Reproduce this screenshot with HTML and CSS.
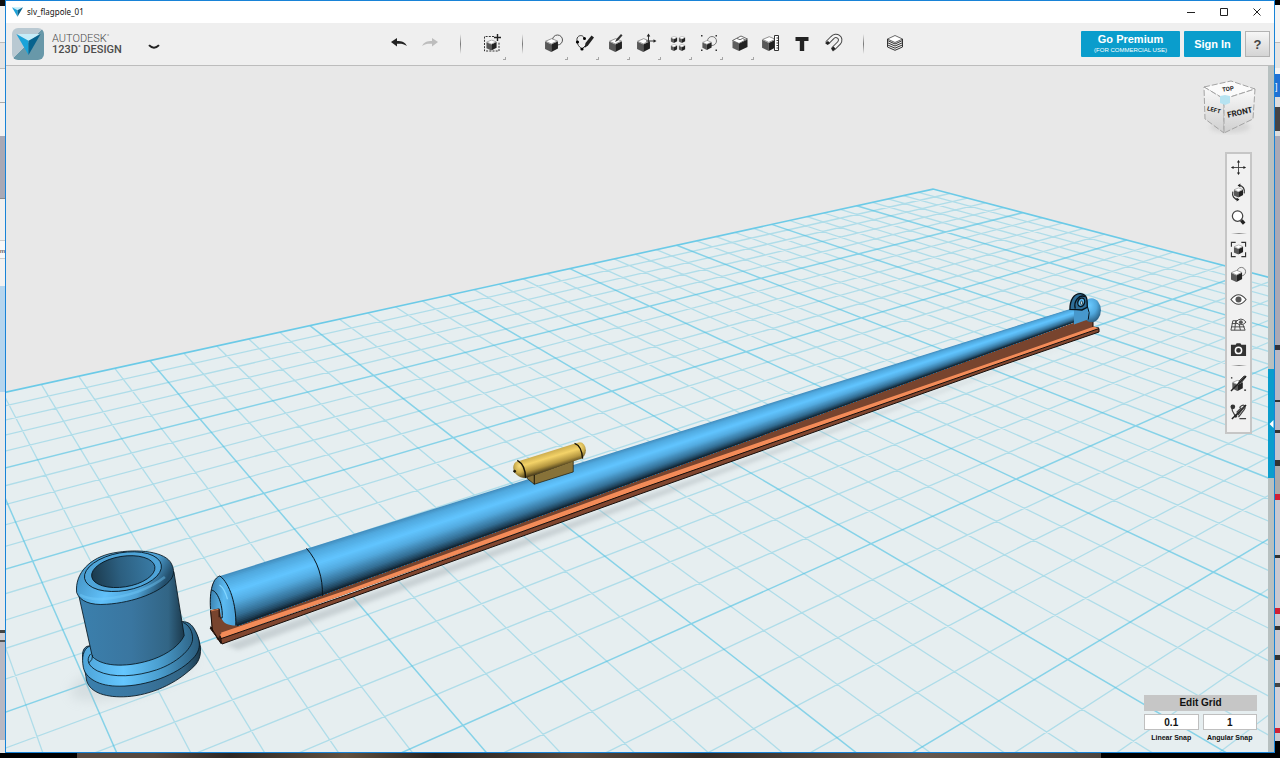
FILE: index.html
```html
<!DOCTYPE html>
<html lang="en">
<head>
<meta charset="utf-8">
<title>slv_flagpole_01</title>
<link rel="stylesheet" href="styles.css">
</head>
<body>
<svg class="defs" aria-hidden="true">
  <defs>
    <symbol id="cube" viewBox="0 0 12 13">
      <path d="M0 3.200 5.800 6v7L0 10.200z" fill="#585858"/>
      <path d="M5.800 6 12 3v6.800L5.800 13z" fill="#222"/>
      <path d="M.5 3 6.200.6l5.300 2.200-5.700 2.700z" fill="#fff" stroke="#666" stroke-width=".6"/>
    </symbol>
    <symbol id="mark" viewBox="0 0 22 19">
      <path d="M1 0h20l-10 7z" fill="#c6ecf8"/><path d="M0 0l11 6v13z" fill="#1aa3d9"/><path d="M22 0 11 6v13z" fill="#07638e"/>
    </symbol>
  </defs>
</svg>
<div class="desktop">
  <div class="edge edge-left"><span>m</span></div>
  <main class="window">
    <header class="titlebar">
      <svg class="title-mark"><use href="#mark"/></svg>
      <h1>slv_flagpole_01</h1>
      <div class="window-buttons">
        <button aria-label="Minimize"><svg viewBox="0 0 8 8"><path d="M0 4.500h8"/></svg></button>
        <button aria-label="Maximize"><svg viewBox="0 0 8 8"><path d="M.5.5h7v7h-7z"/></svg></button>
        <button aria-label="Close"><svg viewBox="0 0 8 8"><path d="M.5.5l7 7m0-7-7 7"/></svg></button>
      </div>
    </header>
    <div class="toolbar">
      <div class="brand">
        <span class="logo"><svg><use href="#mark"/></svg></span>
        <p class="brand-name">AUTODESK<sup>°</sup><b>123D<sup>°</sup> DESIGN</b></p>
        <button class="menu" aria-label="Application menu"><svg viewBox="0 0 12 6"><path d="M1 1.200c3 3.300 7 3.300 10 0" fill="none" stroke="#222" stroke-width="2"/></svg></button>
      </div>
      <nav class="tools" aria-label="Tools">
        <button aria-label="Undo"><svg viewBox="0 0 20 20"><path d="M2 9l6-4v3c5 0 8 1 10 5-3-2-6-2.500-10-2.200V13.500z" fill="#222"/></svg></button>
        <button aria-label="Redo" disabled><svg viewBox="0 0 20 20"><path d="M18 9l-6-4v3C7 8 4 9 2 13c3-2 6-2.500 10-2.200v2.700z" fill="#bdbdbd"/></svg></button>
        <i class="divider"></i>
        <button class="more" aria-label="Transform"><svg viewBox="0 0 20 20"><path d="M12 3.500H2.500v14.500h14.500V9" fill="none" stroke="#333" stroke-dasharray="2 1.200"/><use href="#cube" x="4" y="6.500" width="11" height="11"/><path d="M15.500 1v7M12 4.500h7" stroke="#222" stroke-width="1.400"/></svg></button>
        <i class="divider"></i>
        <button class="more" aria-label="Primitives"><svg viewBox="0 0 20 20"><circle cx="13.500" cy="7" r="5" fill="none" stroke="#555"/><use href="#cube" x="1" y="5" width="13" height="14"/></svg></button>
        <button class="more" aria-label="Sketch"><svg viewBox="0 0 20 20"><path d="M9 5C8 1 1 2 2 8c0 3 2 6 5 8l5-5" fill="none" stroke="#333"/><circle cx="9.500" cy="5.500" r="1.500"/><circle cx="2.500" cy="9" r="1.600"/><circle cx="7" cy="16" r="1.600"/><path d="m9.500 15 1-5 6-7.500 2.500 2-6 8z" fill="#222"/></svg></button>
        <button class="more" aria-label="Construct"><svg viewBox="0 0 20 20"><use href="#cube" x="3" y="5" width="13" height="14"/><path d="M9 9l1.500-3L15 1l1.500 1.500-4.500 5z" fill="#333"/></svg></button>
        <button class="more" aria-label="Modify"><svg viewBox="0 0 20 20"><use href="#cube" x="0" y="5" width="13" height="14"/><path d="M9 8h9M11.500 10V2" stroke="#333"/><path d="M11.500.500 9.700 3.500h3.600zM19.500 8l-3-1.800v3.600z" fill="#222"/></svg></button>
        <button class="more" aria-label="Pattern"><svg viewBox="0 0 20 20"><use href="#cube" x="2.500" y="3" width="7" height="7"/><use href="#cube" x="10.500" y="3" width="7" height="7"/><use href="#cube" x="2.500" y="11" width="7" height="7"/><use href="#cube" x="10.500" y="11" width="7" height="7"/></svg></button>
        <button class="more" aria-label="Grouping"><svg viewBox="0 0 20 20"><circle cx="13" cy="8" r="4.500" fill="none" stroke="#777"/><use href="#cube" x="3" y="7" width="10" height="10"/><path d="M2 2h1.500v1.500H2zM16.500 2H18v1.500h-1.500zM2 16.500h1.500V18H2zM16.500 16.500H18V18h-1.500z" fill="#333"/></svg></button>
        <button class="more" aria-label="Combine"><svg viewBox="0 0 20 20"><path d="M2.500 8 9 10.500V18l-6.500-3z" fill="#5e5e5e"/><path d="m9 10.500 8.500-4V14L9 18z" fill="#222"/><path d="M2.500 7.500 11 3l6.500 3L9 10.500z" fill="#fff" stroke="#444" stroke-width=".8"/><path d="m7 5.500 3 1.200 2.500-1.200 3 1.300" fill="none" stroke="#444" stroke-width=".8"/></svg></button>
        <button aria-label="Measure"><svg viewBox="0 0 20 20"><use href="#cube" x="1" y="3" width="14" height="15"/><path d="M13.500 2.500h4v15h-4z" fill="#fff" stroke="#333"/><path d="M15.500 5H18M15.500 7.500H18M15.500 10H18M15.500 12.500H18M15.500 15H18" stroke="#333"/></svg></button>
        <button aria-label="Text"><svg viewBox="0 0 20 20"><path d="M3.500 4h13v4h-4.300v10H7.800V8H3.500z" fill="#222"/></svg></button>
        <button aria-label="Snap"><svg viewBox="0 0 20 20"><path d="M4 10 9 5c4-5 11 0 7 5l-6 6" fill="none" stroke="#444" stroke-width="4.500"/><path d="M4 10 9 5c4-5 11 0 7 5l-6 6" fill="none" stroke="#f4f4f4" stroke-width="2.500"/><path d="m2 10 3-2 2 2-2.500 2zM8 15.500l2.500-2 2 2-2.500 3z" fill="#222"/></svg></button>
        <i class="divider"></i>
        <button aria-label="Materials"><svg viewBox="0 0 20 20"><path d="m2.500 6 7.500-3.500L17.500 6 10 9.500z" fill="#fff" stroke="#444" stroke-width=".8"/><path d="m2.500 7.500 7.500 3.500 7.500-3.500m-15 2.200L10 13l7.500-3.300m-15 2.200 7.500 3.300 7.500-3.300m-15 2.100 7.500 3.300 7.500-3.300M2.500 6v8M17.500 6v8" fill="none" stroke="#333"/></svg></button>
      </nav>
      <div class="account">
        <button class="cta premium">Go Premium<small>(FOR COMMERCIAL USE)</small></button>
        <button class="cta">Sign In</button>
        <button class="help">?</button>
      </div>
    </div>
    <div class="workspace">
      <section class="canvas" aria-label="3D view">
        <svg class="scene" viewBox="6 66 1262 686" preserveAspectRatio="xMidYMid slice">
          <defs>
            <linearGradient id="body" x2="1"><stop offset="0" stop-color="#3b80ad"/><stop offset=".5" stop-color="#3a76a0"/><stop offset=".85" stop-color="#326585"/><stop offset="1" stop-color="#1b394c"/></linearGradient>
            <linearGradient id="rim" x1="0" y1="0" x2="1" y2=".3"><stop offset="0" stop-color="#3c86b5"/><stop offset=".5" stop-color="#61c1fa"/><stop offset=".8" stop-color="#4da0d3"/><stop offset="1" stop-color="#234e6b"/></linearGradient>
            <linearGradient id="hole" x2="1"><stop offset="0" stop-color="#1b3a4d"/><stop offset=".45" stop-color="#2c5f80"/><stop offset="1" stop-color="#397ba5"/></linearGradient>
            <linearGradient id="foot" x2="1"><stop offset="0" stop-color="#4ea4d8"/><stop offset=".35" stop-color="#65c7ff"/><stop offset=".65" stop-color="#4b9fd0"/><stop offset="1" stop-color="#2a5b7b"/></linearGradient>
            <linearGradient id="gold" gradientUnits="userSpaceOnUse" x1="200" y1="94" x2="217" y2="150"><stop offset="0" stop-color="#c6a74b"/><stop offset=".35" stop-color="#f4d368"/><stop offset=".7" stop-color="#b3953f"/><stop offset="1" stop-color="#3c3116"/></linearGradient>
            <linearGradient id="cap" x1="0" y1="0" x2="1" y2=".2"><stop offset="0" stop-color="#3679a5"/><stop offset=".6" stop-color="#5cbaf1"/><stop offset="1" stop-color="#4da4db"/></linearGradient>
            <radialGradient id="ball" cx=".4" cy=".3" r=".75"><stop offset="0" stop-color="#6bcaff"/><stop offset=".5" stop-color="#50a8dd"/><stop offset="1" stop-color="#26587a"/></radialGradient>
            <radialGradient id="goldball" cx=".5" cy=".3" r=".75"><stop offset="0" stop-color="#f7dc7b"/><stop offset=".5" stop-color="#cfb04e"/><stop offset="1" stop-color="#594a1f"/></radialGradient>
            <filter id="soft" x="-30%" y="-30%" width="160%" height="160%"><feGaussianBlur stdDeviation="6"/></filter>
            <filter id="soft2"><feGaussianBlur stdDeviation="2"/></filter>
          </defs>
          <polygon points="933,189 3658,904 3658,2000 -1256,2000 -1256,667" fill="#e6eef0"/>
          <path id="minor" class="minor"/>
          <path id="major" class="major"/>
          <path id="border" class="border-line"/>
          <ellipse cx="132" cy="676" rx="64" ry="18" transform="rotate(-16 132 676)" fill="#a3adb2" opacity=".25" filter="url(#soft)"/>
          <path d="M225 645 650 494 1098 334 650 500 238 650z" fill="#9ba5aa" opacity=".4" filter="url(#soft2)"/>
          <path d="M211 611 219 609 240 618 1093 316V328L217 640z" fill="#78442e"/>
          <g stroke="#160c08" stroke-linejoin="round">
            <path d="M1093 316V327L1099 328" fill="none"/>
            <path d="M217 634 350 589 640 483.500 1000 359.500 1094 326.500 1099 328.500 1000 363 640 489 220 639z" fill="#f38b58" stroke="none"/>
            <path d="M220 639 350 594 640 489 1000 363 1099 328.500V332L1000 366 640 494 350 598 222 644z" fill="#81462f"/>
            <path d="M210 628 215 626 221 638V643z" fill="#3a2017"/>
          </g>
          <g id="pole"></g>
          <g transform="translate(60 530) scale(.333)" fill="none" stroke="#08141c" stroke-width="3">
            <path d="M452 238C448 180 460 144 480 138 510 160 528 225 528 287 505 286 490 282 484 262L479 237z" fill="url(#cap)" stroke="none"/>
            <path d="M452 238C448 180 460 144 480 138"/>
            <path d="M480 138C510 160 530 225 528 287M740 55C774 92 790 144 788 198M455 181C472 181 490 225 487 264L480 264"/>
            <path d="M479 165q15 10 24 43" stroke="#83d6ff" stroke-width="4"/>
            <path d="M452 242 478 237 484 310 474 326 456 302z" fill="#78442e" stroke="none"/>
            <path d="M458 304 452 242 478 237V262M452 290l32 52" stroke="#160c08"/>
            <path d="M453 243 476 238" stroke="#d97b4e"/>
          </g>
          <g transform="translate(60 530) scale(.333)" stroke="#06131c" stroke-width="2.500">
            <path d="M68 385C64 350 85 345 94 350L365 276C405 278 418 330 422 352 424 390 410 405 385 425 320 480 240 502 180 501 120 500 80 480 78 440z" fill="url(#body)"/>
            <path d="M90 348C68 358 65 385 70 412 76 444 115 470 180 469 260 469 350 435 395 390 425 362 424 335 405 300 395 282 385 276 368 275z" fill="url(#foot)"/>
            <path d="M92 372C77 390 85 409 112 423 160 446 230 440 290 420 350 400 395 358 398 330 400 305 387 285 370 278" fill="none"/>
            <path d="M55 190 97 380C130 414 210 412 280 388 325 372 360 345 373 317L342 125z" fill="url(#body)"/>
            <path d="M86 400Q99 390 98 376" fill="none"/>
            <path d="M50 188C44 130 90 82 160 69 235 55 318 65 335 102 344 120 342 136 333 148 305 186 220 218 140 223 92 227 60 214 50 188z" fill="url(#rim)"/>
            <path d="M60 195q30 16 75 12 110-12 180-66" fill="none" stroke="#75d0ff" stroke-width="8" opacity=".4"/>
            <ellipse cx="189" cy="125" rx="117" ry="57" transform="rotate(-10 189 125)" fill="#4ea4d8"/>
            <ellipse cx="190" cy="125" rx="96" ry="46" transform="rotate(-9 190 125)" fill="url(#hole)"/>
          </g>
          <g transform="translate(480 420) scale(.333)" stroke="#171205" stroke-width="3">
            <path d="M142 160 163 165 280 122V156L163 193 142 176z" fill="#877239" stroke-width="2"/>
            <path d="M163 164V193" />
            <ellipse cx="300" cy="91" rx="18" ry="24" fill="url(#goldball)" stroke="none"/>
            <path d="M120 122 290 69Q306 85 310 114L137 174z" fill="url(#gold)" stroke="none"/>
            <path d="M120 122C90 122 92 172 137 174 139 155 132 132 120 122z" fill="url(#goldball)" stroke="none"/>
            <path d="M112 121Q136 134 137 174M284 70Q306 78 308 116" fill="none" stroke-width="4"/>
            <circle cx="104" cy="154" r="3" fill="#171205"/>
          </g>
          <g transform="translate(1000 270) scale(.333)" stroke="#07131a" stroke-width="4">
            <ellipse cx="275" cy="121" rx="28" ry="36" fill="url(#ball)" stroke="none"/>
            <path d="M222 115 263 112 266 148 222 164z" fill="#4798cc" stroke="none"/>
            <path d="M262 108Q272 128 265 149" fill="none" stroke-width="3"/>
            <path d="M210 118C210 90 222 70 242 71 263 74 262 90 262 112L246 120 230 119z" fill="#2f6e98"/>
            <path d="M226 116C220 94 238 72 255 80" fill="none"/>
            <ellipse cx="244" cy="97" rx="10" ry="13" fill="#5ab4e9" transform="rotate(18 244 97)"/>
            <ellipse cx="245" cy="99" rx="3" ry="6" fill="#dff1f5" stroke-width="2"/>
          </g>
        </svg>

        <svg class="viewcube" viewBox="0 0 56 60" role="img" aria-label="View cube">
          <defs><linearGradient id="face" y2="1" x2="0"><stop offset="0" stop-color="#fafafa"/><stop offset="1" stop-color="#cfcfcf"/></linearGradient></defs>
          <ellipse cx="29" cy="49" rx="20" ry="6" fill="#bbb" opacity=".4" filter="url(#soft2)"/>
          <g stroke="#a4a4a4" stroke-dasharray="6 2">
            <path d="M3 9 30 3 54 11 23 21z" fill="#fbfbfb"/>
            <path d="M3 9 23 21V55L4 41z" fill="url(#face)"/>
            <path d="M23 21 54 11 52 41 23 55z" fill="url(#face)"/>
          </g>
          <path d="m19 18 5-1 5 1v7l-5 2-5-2z" fill="#b6e3f1"/>
          <g class="cube-labels">
            <text x="27" y="13" transform="rotate(-8 27 11)">TOP</text>
            <text x="13" y="34" transform="rotate(14 13 32)">LEFT</text>
            <text x="39" y="37" transform="rotate(-13 39 35)" class="front">FRONT</text>
          </g>
        </svg>

        <nav class="navbar" aria-label="Navigation">
          <button aria-label="Pan"><svg viewBox="0 0 18 18"><path d="M9 2v14M2 9h14" stroke="#444"/><path d="m9 1 1.700 2.800H7.300zM9 17l1.700-2.800H7.300zM1 9l2.800-1.700v3.400zM17 9l-2.800-1.700v3.400z" fill="#222"/></svg></button>
          <button aria-label="Orbit"><svg viewBox="0 0 18 18"><use href="#cube" x="4" y="3.500" width="10" height="11"/><path d="M9 1.500c5 0 7 4 6 8.500M9 16.500c-5 0-7-4-6-8.500" fill="none" stroke="#333" stroke-width="1.300"/><path d="m8 1.500 3-2v4zM10 16.500l-3-2v4z" fill="#222"/></svg></button>
          <button aria-label="Zoom"><svg viewBox="0 0 18 18"><circle cx="8" cy="7.500" r="5.500" fill="#fff" stroke="#444" stroke-width="1.300"/><path d="m12 12 3 3.500" stroke="#222" stroke-width="3.500"/></svg></button>
          <hr>
          <button aria-label="Fit"><svg viewBox="0 0 18 18"><use href="#cube" x="4" y="3.500" width="10" height="11"/><path d="M6 1.500H1.500V6M12 1.500h4.500V6M6 16.500H1.500V12M12 16.500h4.500V12" fill="none" stroke="#333" stroke-width="1.200"/></svg></button>
          <button aria-label="Display style"><svg viewBox="0 0 18 18"><circle cx="12" cy="6" r="4.500" fill="none" stroke="#777"/><use href="#cube" x="1" y="4" width="12" height="13"/></svg></button>
          <button aria-label="Visibility"><svg viewBox="0 0 18 18"><path d="M1 9Q9-1 17 9 9 19 1 9z" fill="#fff" stroke="#444" stroke-width="1.200"/><circle cx="9" cy="9" r="3.200" fill="#555"/></svg></button>
          <button aria-label="Grid visibility"><svg viewBox="0 0 18 18"><path d="M3 5h9l4 10H1zM2 8h13M1.500 11.500h14M6 5 5 15M9 5l2 10" fill="none" stroke="#444"/><path d="M6 6.500Q11.500 0 17 6.500 11.500 12 6 6.500z" fill="#f4f4f4" stroke="#444"/><circle cx="11.500" cy="6.500" r="2" fill="#555"/></svg></button>
          <button aria-label="Screenshot"><svg viewBox="0 0 18 18"><path d="M1 4h5l1-1.500h4L12 4h5v12H1z" fill="#333"/><circle cx="9" cy="10" r="3.300" fill="#333" stroke="#fff" stroke-width="1.600"/></svg></button>
          <hr>
          <button class="tall" aria-label="Hide solids"><svg viewBox="0 0 18 18"><use href="#cube" x="2" y="5" width="12" height="12"/><path d="m9 9 1-3 5-5 2 1-5 6z" fill="#777" stroke="#333"/><path d="M1 17 17 1M1 3h1.500M15 16h2" stroke="#222" stroke-width="1.500"/></svg></button>
          <button class="tall" aria-label="Hide sketches"><svg viewBox="0 0 18 18"><path d="M2 5c0 5 2 6 4 9m4-9c4-5 8-2 5 2l-6 8M7 10l5-5M10 16.500h7" fill="none" stroke="#444" stroke-width="1.300"/><circle cx="3" cy="4" r="2.500" fill="#333"/><circle cx="6" cy="14" r="1.500" fill="#333"/><path d="M2 17 17 2" stroke="#222" stroke-width="1.500"/><path d="m8 13 7-9" stroke="#333" stroke-width="1.500"/></svg></button>
        </nav>

        <form class="snap">
          <button type="button">Edit Grid</button>
          <label><input type="text" value="0.1">Linear Snap</label>
          <label><input type="text" value="1">Angular Snap</label>
        </form>
      </section>
      <aside class="rail"><button aria-label="Open side panel"><svg viewBox="0 0 5 8"><path d="M4.500 0v8L.500 4z" fill="#fff"/></svg></button></aside>
    </div>
  </main>
  <div class="edge edge-right"><span>]</span></div>
  <div class="edge-bottom"></div>
</div>
<script src="scene.js"></script>
</body>
</html>
```

FILE: styles.css
```css
* { box-sizing: border-box; }
body { margin: 0; font-family: "Liberation Sans", Arial, sans-serif; background: #000; }
button { border: 0; padding: 0; background: none; font: inherit; color: inherit; display: grid; place-items: center; }
.defs { position: absolute; width: 0; height: 0; }
.desktop { display: grid; grid-template-columns: 5px minmax(0, 1fr) 5px; grid-template-rows: minmax(0, 1fr) 5px; height: 100vh; }

.edge { overflow: hidden; font-size: 9px; line-height: 12px; }
.edge-left { padding-top: 245px; font-size: 6px; background: linear-gradient(#111 0 6px, #f2f2f2 6px 42px, #bbb 42px 43px, #e4e4e4 43px 68px, #bbb 68px 69px, #f2f2f2 69px 102px, #aaa 102px 103px, #f2f2f2 103px 136px, #a9a9b5 136px 198px, #888 198px 199px, #f0f0f0 199px 240px, #ccc 240px 241px, #f8f8f8 241px 258px, #ccc 258px 259px, #f2f2f2 259px 286px, #b5d5ee 286px 392px, #e8eaec 392px 630px, #444 630px 633px, #d0d0d6 633px 640px, #555 640px 642px, #b8b8c2 642px 740px, #e4e4e4 740px); }
.edge span { display: block; }
.edge-right { padding-top: 81px; color: #fff; background: linear-gradient(#000 0 5px, #f4f4f4 5px 42px, #bbb 42px 43px, #e4e4e4 43px 68px, #f4f4f4 68px 74px, #1f71d4 74px 97px, #ddd 97px 107px, #444 107px 131px, #ddd 131px 136px, #a9a9b5 136px 345px, #33333b 345px 350px, #b8b8c4 350px 400px, #333 400px 402px, #b8b8c4 402px 430px, #333 430px 433px, #c5c5cd 433px 460px, #333 460px 466px, #aaa 466px 494px, #d01f35 494px 500px, #c8c8d0 500px 555px, #333 555px 558px, #c8c8d0 558px 608px, #d01f35 608px 614px, #c8c8d0 614px 626px, #333 626px 630px, #c8c8d0 630px 655px, #333 655px 660px, #d0d0d8 660px 683px, #444 683px 687px, #d0d0d8 687px 728px, #d01f35 728px 733px, #c8c8d0 733px 741px, #000 741px); }
.edge-bottom { grid-column: 1 / -1; background: linear-gradient(90deg, #000 6%, #55483f 6% 12%, #2c2724 18%, #60503f 27%, #262220 34%, #54473c 45%, #302a26 55%, #65584e 72%, #4b443f 86%, #000 86%); }

.window { display: flex; flex-direction: column; min-width: 0; border: 1px solid #1883d7; background: #fff; }
.titlebar { display: flex; align-items: center; flex: 0 0 22px; padding: 0 6px; background: #fff; }
.title-mark { width: 11px; height: 10px; margin-right: 4px; }
.titlebar h1 { margin: 0 auto 0 0; font: 8px/12px "Noto Sans", sans-serif; color: #111; }
.window-buttons { display: flex; }
.window-buttons button { width: 33px; height: 20px; }
.window-buttons button:last-child { width: 22px; margin-left: 6px; }
.window-buttons svg { width: 8px; height: 8px; fill: none; stroke: #222; }

.toolbar { display: flex; align-items: center; justify-content: space-between; flex: 0 0 43px; background: #efefef; border-bottom: 1px solid #bcbcbc; padding-right: 4px; }
.brand { display: flex; align-items: center; flex: 0 0 377px; padding-left: 6px; }
.logo { display: grid; place-items: center; width: 32px; height: 32px; border-radius: 6px; background: linear-gradient(135deg, #b9c9d2 50%, #6898a9 50%); }
.logo svg { width: 25px; height: 21px; }
.brand-name { margin: 0 0 0 8px; width: 90px; font: 300 11px/11px Roboto, sans-serif; color: #4c4c4c; }
.brand-name b { display: block; font-weight: 500; }
.brand-name sup { font-size: 7px; line-height: 0; vertical-align: 3px; }
.menu { width: 23px; height: 20px; padding-top: 6px; }
.menu svg { width: 12px; height: 6px; }
.tools { display: flex; flex: 0 0 auto; align-items: center; margin-right: auto; }
.tools button, .divider { width: 31px; height: 42px; padding-bottom: 2px; position: relative; }
.tools svg { width: 20px; height: 20px; }
.more::after { content: ""; position: absolute; right: 1px; bottom: 5px; border: solid #a5a5a5; border-width: 0 1px 1px 0; width: 2px; height: 2px; }
.divider { background: linear-gradient(#efefef, #777, #efefef) center / 1px 20px no-repeat; }
.account { display: flex; gap: 4px; font-weight: 700; }
.cta { width: 57px; height: 26px; background: #0a9dcc; color: #fff; font-size: 11px; line-height: 12px; border-radius: 1px; }
.premium { width: 99px; align-content: center; }
.cta small { font-size: 6px; line-height: 10px; font-weight: 400; }
.help { width: 25px; height: 26px; border: 1px solid #b2b2b2; background: linear-gradient(#f6f6f6, #d4d4d4); color: #444; font-size: 13px; }

.workspace { display: flex; flex: 1; min-height: 0; }
.canvas { position: relative; flex: 1; min-width: 0; overflow: hidden; background: #e8e8e8; }
.scene { position: absolute; inset: 0; width: 100%; height: 100%; }
.minor { fill: none; stroke: #5cc4df; stroke-opacity: .4; stroke-width: 1.300; }
.major { fill: none; stroke: #46bfe2; stroke-opacity: .6; stroke-width: 1.500; }
.border-line { fill: none; stroke: #6bcae7; stroke-width: 1.600; }
.viewcube { position: absolute; top: 12px; right: 11px; width: 56px; height: 60px; }
.cube-labels { font: 700 6px Roboto, sans-serif; fill: #222; text-anchor: middle; }
.cube-labels .front { font-size: 8px; }
.navbar { position: absolute; top: 86px; right: 16px; width: 27px; padding: 1px 0 7px; display: flex; flex-direction: column; align-items: center; background: #f1f1f1; border: 2px solid #c6c6c6; }
.navbar button { width: 23px; height: 25px; }
.navbar button.tall { height: 28px; }
.navbar svg { width: 17px; height: 17px; overflow: visible; }
.navbar hr { width: 16px; height: 1px; margin: 3px 0; border: 0; background: linear-gradient(90deg, #f1f1f1, #888, #f1f1f1); }
.snap { position: absolute; right: 11px; bottom: 9px; width: 113px; display: grid; grid-template-columns: 1fr 1fr; gap: 3px 4px; font-size: 7px; line-height: 10px; font-weight: 700; color: #111; }
.snap button { grid-column: 1 / -1; height: 16px; background: #c6c6c6; font-size: 10px; }
.snap label { display: flex; flex-direction: column; gap: 3px; text-align: center; white-space: nowrap; }
.snap input { width: 100%; height: 16px; padding: 0; border: 1px solid #bfbfbf; background: #fff; text-align: center; font: 700 10px/14px "Liberation Sans", Arial, sans-serif; color: #111; }
.rail { flex: 0 0 6px; padding-top: 303px; background: #b7c0c0; }
.rail button { width: 6px; height: 109px; background: #0a9dcc; }
.rail svg { width: 5px; height: 8px; }
```

FILE: scene.js
```js
// Perspective projection of the work plane: u runs along the left edge, v along the right.
const depth = (u, v) => 1 - 0.01004 * u - 0.01388 * v;
const project = (u, v) => {
  const d = depth(u, v);
  return [(933 - 23.881 * u + 3.73 * v) / d, (189.1 + 1.28 * u + 1.76 * v) / d]
    .map(n => n.toFixed(1)).join(" ");
};
const NEAR = 0.1;
const endV = u => Math.min(62, (1 - NEAR - 0.01004 * u) / 0.01388);
const endU = v => Math.min(86, (1 - NEAR - 0.01388 * v) / 0.01004);
let minor = "", major = "";
for (let k = 1; k <= 85; k++) {
  let line = `M${project(k, 0)}L${project(k, endV(k))}`;
  if (k <= 60) line += `M${project(0, k)}L${project(endU(k), k)}`;
  if (k % 5) minor += line; else major += line;
}
document.getElementById("minor").setAttribute("d", minor);
document.getElementById("major").setAttribute("d", major);
document.getElementById("border").setAttribute("d",
  `M${project(60, 0)}L${project(0, 0)}L${project(0, 50)}`);

// The tapering pole is shaded in thin bands from its upper to its lower edge.
const stops = [[0, [66, 140, 188]], [0.1, [80, 168, 221]], [0.35, [98, 197, 255]],
  [0.55, [84, 172, 225]], [0.8, [53, 112, 151]], [0.93, [30, 64, 88]], [1, [14, 28, 38]]];
const shade = t => {
  const i = Math.max(1, stops.findIndex(s => s[0] >= t));
  const [a, b] = [stops[i - 1], stops[i]];
  const f = (t - a[0]) / (b[0] - a[0]);
  return `rgb(${a[1].map((c, n) => Math.round(c + (b[1][n] - c) * f))})`;
};
const N = 32;
const at = t => [[220 + 17 * t, 576 + 50 * t], [1072 + 16 * t, 308.5 + 8.5 * t]];
let bands = "";
for (let i = 0; i < N; i++) {
  const a = at(i / N), b = at(1);
  bands += `<polygon points="${a[0]} ${a[1]} ${b[1]} ${b[0]}" fill="${shade((i + 0.5) / N)}"/>`;
}
document.getElementById("pole").innerHTML = bands;
```
